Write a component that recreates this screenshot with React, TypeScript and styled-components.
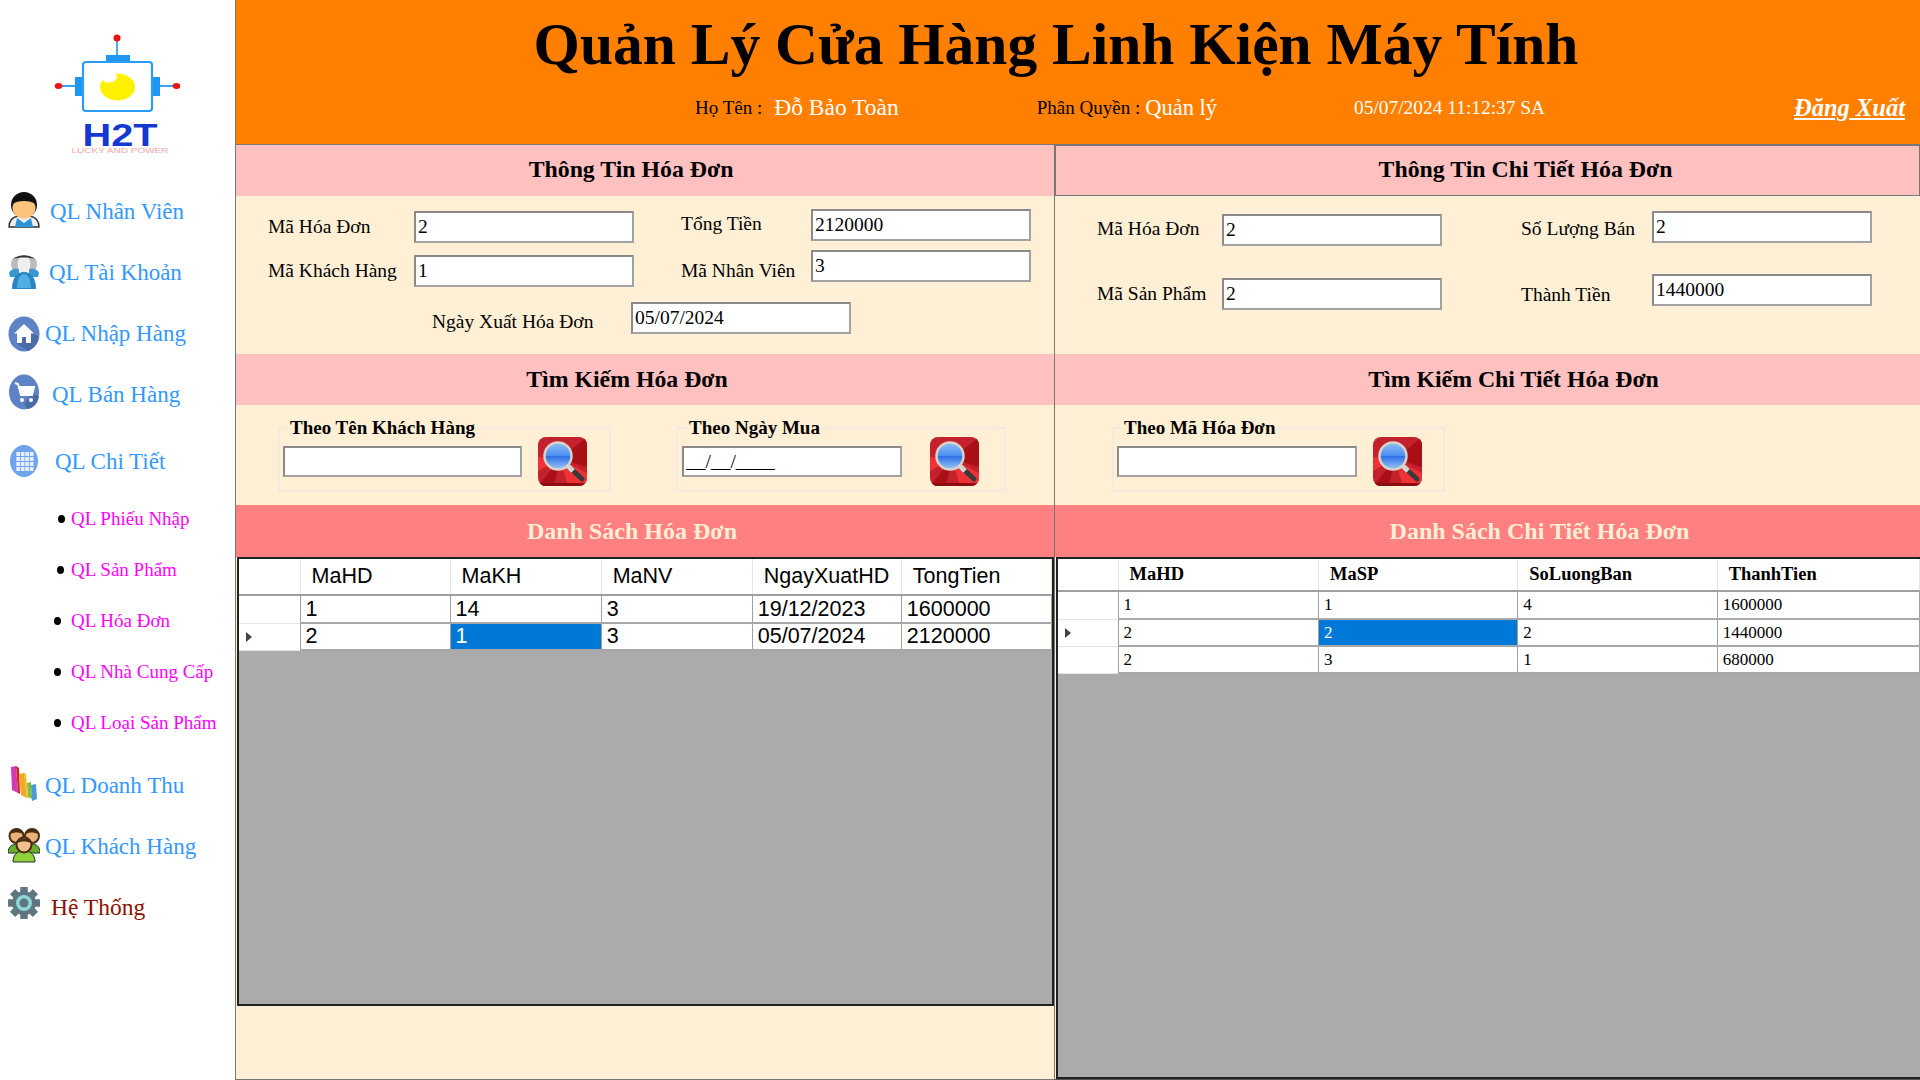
import styled, { createGlobalStyle } from "styled-components";

const GlobalStyle = createGlobalStyle`
  html, body {
    margin: 0;
    padding: 0;
    background: #fff;
    font-family: "Liberation Serif", "Times New Roman", serif;
    overflow: hidden;
  }
  * { box-sizing: border-box; }
`;

const Page = styled.div`
  display: flex;
  width: 1920px;
  height: 1080px;
  overflow: hidden;
`;
const Sidebar = styled.aside`
  width: 236px;
  flex: none;
  background: #fff;
  border-right: 1px solid #777;
`;
const LogoArea = styled.div`
  height: 181px;
  padding: 25px 0 0 50px;
  svg { display: block; }
`;
const NavItem = styled.div<{ $gap: number; $top?: number; $iconUp?: number }>`
  display: flex;
  align-items: center;
  height: 61px;
  padding-left: 8px;
  margin-top: ${(p) => p.$top ?? 0}px;
  svg {
    flex: none;
    margin-right: ${(p) => p.$gap}px;
    transform: translateY(-${(p) => p.$iconUp ?? 0}px);
  }
`;
const NavText = styled.span<{ $dark?: boolean }>`
  font-size: ${(p) => (p.$dark ? 23.5 : 23)}px;
  color: ${(p) => (p.$dark ? "#8B1000" : "#3399ff")};
  white-space: nowrap;
`;
const SubList = styled.div`
  margin-top: 1px;
`;
const SubItem = styled.div<{ $dot: number }>`
  display: flex;
  align-items: center;
  height: 51px;
  padding-left: ${(p) => p.$dot}px;
  font-size: 19px;
  color: #ff00ff;
  white-space: nowrap;
`;
const Dot = styled.span<{ $gap: number }>`
  width: 7px;
  height: 8px;
  border-radius: 50%;
  background: #000;
  margin-right: ${(p) => p.$gap}px;
`;

const Main = styled.main`
  flex: 1;
  display: flex;
  flex-direction: column;
  min-width: 0;
`;
const Header = styled.header`
  height: 145px;
  flex: none;
  background: #ff8000;
  border-bottom: 1px solid #777;
`;
const AppTitle = styled.h1`
  margin: 0;
  height: 88px;
  line-height: 88px;
  font-size: 59.5px;
  font-weight: bold;
  text-align: center;
  padding-right: 44px;
  color: #000;
`;
const InfoRow = styled.div`
  display: flex;
  align-items: center;
  height: 39px;
  padding-left: 459px;
`;
const InfoLabel = styled.span<{ $left?: number }>`
  font-size: 19px;
  color: #000;
  margin-left: ${(p) => p.$left ?? 0}px;
  white-space: nowrap;
`;
const InfoValue = styled.span<{ $left: number; $size?: number }>`
  font-size: ${(p) => p.$size ?? 23.5}px;
  color: #fff;
  margin-left: ${(p) => p.$left}px;
  white-space: nowrap;
`;
const Logout = styled.a`
  margin-left: auto;
  margin-right: 15px;
  font-size: 24.5px;
  font-weight: bold;
  font-style: italic;
  text-decoration: underline;
  color: #fff;
`;

const Panels = styled.div`
  flex: 1;
  display: flex;
  min-height: 0;
`;
const LeftPanel = styled.section`
  width: 818px;
  flex: none;
  display: flex;
  flex-direction: column;
  background: #ffefd5;
  border-bottom: 1px solid #777;
`;
const RightPanel = styled.section`
  flex: 1;
  display: flex;
  flex-direction: column;
  background: #ffefd5;
  min-width: 0;
  border-left: 1px solid #777;
  border-bottom: 1px solid #555;
`;
const SectionTitle = styled.h2<{ $shift: number; $boxed?: boolean; $raise?: number }>`
  margin: 0;
  height: 51px;
  flex: none;
  display: flex;
  align-items: center;
  justify-content: center;
  font-size: 23.8px;
  font-weight: bold;
  color: #000;
  background: #ffc0c0;
  padding-left: ${(p) => Math.max(p.$shift, 0) * 2}px;
  padding-right: ${(p) => Math.max(-p.$shift, 0) * 2}px;
  padding-bottom: ${(p) => p.$raise ?? 0}px;
  ${(p) => (p.$boxed ? "border: 1px solid #777;" : "")}
`;
const ListTitle = styled(SectionTitle)`
  height: 52px;
  font-size: 24px;
  color: #ffefd5;
  background: #ff8080;
`;

const FormBody = styled.div<{ $pad: number }>`
  height: 158px;
  flex: none;
  padding: ${(p) => p.$pad}px 0 0;
`;
const FormRows = styled.div`
  display: flex;
`;
const FormColumn = styled.div<{ $left: number; $gap: number; $top?: number }>`
  display: flex;
  flex-direction: column;
  gap: ${(p) => p.$gap}px;
  margin-left: ${(p) => p.$left}px;
  margin-top: ${(p) => p.$top ?? 0}px;
`;
const Field = styled.div<{ $label: number }>`
  display: grid;
  grid-template-columns: ${(p) => p.$label}px 220px;
  align-items: center;
`;
const FieldLabel = styled.label<{ $dy?: number }>`
  font-size: 19.5px;
  color: #000;
  white-space: nowrap;
  position: relative;
  top: ${(p) => p.$dy ?? 0}px;
`;
const DateField = styled(Field)`
  margin: 15px 0 0 196px;
`;
const TextBox = styled.input`
  display: block;
  width: 220px;
  height: 32px;
  padding: 0 2px;
  font-family: "Liberation Serif", serif;
  font-size: 19.5px;
  color: #000;
  background: #fff;
  border: 2px solid #a2a2a2;
  border-top-color: #8a8a8a;
  border-left-color: #8a8a8a;
  outline: none;
`;

const SearchBody = styled.div<{ $left: number }>`
  height: 100px;
  flex: none;
  display: flex;
  align-items: flex-start;
  padding: 13px 0 0 ${(p) => p.$left}px;
`;
const SearchGroup = styled.fieldset<{ $width: number; $left?: number; $pad?: number }>`
  width: ${(p) => p.$width}px;
  height: 74px;
  margin: 0 0 0 ${(p) => p.$left ?? 0}px;
  padding: 0 0 0 ${(p) => p.$pad ?? 3}px;
  min-width: 0;
  border: 2px solid #f1ebdf;
`;
const SearchLegend = styled.legend`
  height: 20px;
  line-height: 20px;
  padding: 0 2px;
  margin-left: 5px;
  font-size: 19px;
  font-weight: bold;
  color: #000;
`;
const SearchRow = styled.div<{ $gap: number }>`
  display: flex;
  align-items: center;
  gap: ${(p) => p.$gap}px;
  height: 47px;
`;
const SearchBox = styled(TextBox)<{ $width: number }>`
  width: ${(p) => p.$width}px;
  height: 31px;
`;
const SearchButton = styled.button`
  width: 49px;
  height: 49px;
  flex: none;
  padding: 0;
  border: 0;
  background: none;
  svg { display: block; }
`;

const GridBox = styled.div<{ $fill?: boolean }>`
  height: ${(p) => (p.$fill ? "auto" : "449px")};
  flex: ${(p) => (p.$fill ? "1" : "none")};
  background: #ababab;
  border: 2px solid #222;
  margin-left: 1px;
  border-right-width: ${(p) => (p.$fill ? "0" : "2px")};
`;
const DataTable = styled.table<{ $serif?: boolean }>`
  table-layout: fixed;
  border-collapse: collapse;
  width: 100%;
  font-family: ${(p) => (p.$serif ? '"Liberation Serif", serif' : '"Liberation Sans", Arial, sans-serif')};
  font-size: ${(p) => (p.$serif ? "17px" : "21.5px")};
  color: #000;
`;
const HeadRow = styled.tr<{ $height: number }>`
  height: ${(p) => p.$height}px;
`;
const HeadCell = styled.th<{ $serif?: boolean }>`
  padding: 0 0 0 11px;
  text-align: left;
  font-weight: ${(p) => (p.$serif ? "bold" : "normal")};
  font-size: ${(p) => (p.$serif ? "18.5px" : "inherit")};
  white-space: nowrap;
  background: #fff;
  border-right: 1px solid #e4e4e4;
  border-bottom: 2px solid #a0a0a0;
`;
const BodyRow = styled.tr<{ $height: number }>`
  height: ${(p) => p.$height}px;
`;
const Cell = styled.td<{ $selected?: boolean }>`
  padding: 0 0 0 5px;
  white-space: nowrap;
  background: ${(p) => (p.$selected ? "#0078d7" : "#fff")};
  color: ${(p) => (p.$selected ? "#fff" : "#000")};
  border-right: 1px solid #a0a0a0;
  border-bottom: 2px solid #a8a8a8;
`;
const RowHead = styled.td`
  padding: 0 0 0 7px;
  background: #fff;
  border-right: 1px solid #a0a0a0;
  border-bottom: 1px solid #e4e4e4;
`;
const RowArrow = styled.span`
  display: block;
  width: 0;
  height: 0;
  border-top: 5px solid transparent;
  border-bottom: 5px solid transparent;
  border-left: 6px solid #444;
`;
const FooterBlank = styled.div`
  flex: 1;
`;

function PersonIcon() {
  return (
    <svg width="32" height="36" viewBox="0 0 32 36">
      <path d="M1 35c0-7 4-10 9-11h12c5 1 9 4 9 11z" fill="#eee" stroke="#333" strokeWidth="1.4" />
      <path d="M9 26l7 5 7-5 2 9H7z" fill="#2f93d8" />
      <ellipse cx="16" cy="13" rx="13" ry="13" fill="#111" />
      <ellipse cx="16" cy="16" rx="11.500" ry="10.500" fill="#fdc27e" />
      <path d="M5 12c4-4 18-4 22 0-3-10-19-10-22 0z" fill="#111" />
    </svg>
  );
}
function UsersIcon() {
  return (
    <svg width="32" height="36" viewBox="0 0 32 36">
      <ellipse cx="8" cy="10" rx="5" ry="7" fill="#bbb" />
      <ellipse cx="24" cy="10" rx="5" ry="7" fill="#bbb" />
      <path d="M1 19c2-5 8-5 10-3v7H2zM31 19c-2-5-8-5-10-3v7h9z" fill="#3b97cf" />
      <ellipse cx="16" cy="10" rx="6.5" ry="8.5" fill="#eee" />
      <path d="M5 5c6-5 16-5 22 0-6-2-16-2-22 0z" fill="#333" />
      <path d="M4 35c0-10 4-17 12-17s12 7 12 17z" fill="#2a86c2" />
      <path d="M9 34c0-8 3-14 7-14s7 6 7 14z" fill="#52aee0" />
    </svg>
  );
}
function HomeIcon() {
  return (
    <svg width="32" height="36" viewBox="0 0 32 36">
      <ellipse cx="16" cy="18" rx="15.5" ry="17.5" fill="#5d83c6" />
      <path d="M24 16l7 5c-2 8-6 12-11 14l-12-8z" fill="#4b6ba6" />
      <path d="M16 8L6 17.5h3V27h5v-6h4v6h5v-9.500h3z" fill="#fff" />
    </svg>
  );
}
function CartIcon() {
  return (
    <svg width="32" height="36" viewBox="0 0 32 36">
      <ellipse cx="16" cy="18" rx="15" ry="17.500" fill="#5d83c6" />
      <path d="M16 30l8-10 7 2c-1 8-6 12-11 13z" fill="#4b6ba6" />
      <path d="M7 9l3 1 3 11h11l2-8H11" fill="none" stroke="#fff" strokeWidth="2" />
      <path d="M11.500 13h14l-2 8H13.500z" fill="#fff" />
      <circle cx="14" cy="26" r="2" fill="#fff" />
      <circle cx="23" cy="26" r="2" fill="#fff" />
    </svg>
  );
}
function GridIcon() {
  const cells = [10, 14.5, 19, 23.5];
  return (
    <svg width="32" height="36" viewBox="0 0 32 36">
      <ellipse cx="16" cy="18" rx="14" ry="16" fill="#6fa3ea" />
      {cells.map((x) =>
        [9, 14, 19, 24].map((y) => (
          <rect key={`${x}-${y}`} x={x - 1.7} y={y} width="3.700" height="4" fill="#e6effb" />
        ))
      )}
    </svg>
  );
}
function ChartIcon() {
  return (
    <svg width="32" height="36" viewBox="0 0 32 36">
      <path d="M3 2l5-1 2 27-6-3z" fill="#d43ab0" />
      <path d="M8 1l3 2 1 26-2-1z" fill="#c62828" />
      <path d="M11 9l5-1 3 25-6-3z" fill="#f5a623" />
      <path d="M16 8l2 1 2 24-1 0z" fill="#e2c21a" />
      <path d="M19 18l4-1 1 17-4-2z" fill="#7fbf3a" />
      <path d="M23 20l5-1 1 15-5 2z" fill="#4e9ad4" />
    </svg>
  );
}
function CustomersIcon() {
  return (
    <svg width="32" height="36" viewBox="0 0 32 36">
      <circle cx="8.500" cy="9" r="7" fill="#e8b27a" stroke="#4a2c12" strokeWidth="2" />
      <circle cx="24" cy="9" r="7" fill="#e8b27a" stroke="#4a2c12" strokeWidth="2" />
      <path d="M2 7c2-6 11-6 13 0-4-2-9-2-13 0zM17 7c2-6 11-6 13 0-4-2-9-2-13 0z" fill="#4a2c12" />
      <path d="M0 26c0-7 5-9 9-9s8 2 8 9zM15 26c0-7 5-9 9-9s8 2 8 9z" fill="#6cae2c" stroke="#233" strokeWidth="1" />
      <path d="M5 35c0-8 5-11 11-11s11 3 11 11z" fill="#8fd13a" stroke="#233" strokeWidth="1" />
      <circle cx="16" cy="18" r="7.500" fill="#f2c08c" stroke="#4a2c12" strokeWidth="2" />
      <path d="M9 16c2-6 12-6 14 0-4-2-10-2-14 0z" fill="#4a2c12" />
    </svg>
  );
}
function GearIcon() {
  const teeth = [0, 45, 90, 135, 180, 225, 270, 315];
  return (
    <svg width="32" height="36" viewBox="0 0 32 36">
      {teeth.map((a) => (
        <rect key={a} x="12.500" y="2" width="7" height="32" fill="#5f7681" transform={`rotate(${a} 16 18)`} />
      ))}
      <circle cx="16" cy="18" r="12" fill="#5f7681" />
      <circle cx="16" cy="18" r="8" fill="#8ed6d8" />
      <circle cx="16" cy="18" r="4.500" fill="#5f7681" />
    </svg>
  );
}
function Logo() {
  return (
    <svg width="130" height="130" viewBox="50 25 130 130">
      <g stroke="#3aa0f5" fill="none" strokeWidth="1.800">
        <path d="M117 38v18M58 86h18M160 86h17" />
      </g>
      <rect x="106" y="55" width="24" height="7" fill="#1f96f3" />
      <rect x="75" y="77" width="8" height="19" fill="#1f96f3" />
      <rect x="152" y="77" width="8" height="19" fill="#1f96f3" />
      <rect x="83" y="62" width="69" height="49" rx="3" fill="#fff" stroke="#2b9cf5" strokeWidth="2.200" />
      <ellipse cx="117.500" cy="87" rx="17.500" ry="13.500" fill="#fff200" />
      <ellipse cx="109" cy="77" rx="8" ry="5.500" fill="#fff" />
      <circle cx="117" cy="38" r="3.500" fill="#ee1111" />
      <ellipse cx="58.500" cy="86" rx="3.800" ry="3" fill="#ee1111" />
      <ellipse cx="176.500" cy="86" rx="3.800" ry="3" fill="#ee1111" />
      <text x="120" y="146" textAnchor="middle" fontFamily="Liberation Sans, sans-serif" fontWeight="bold" fontSize="31" fill="#1438d2" textLength="75" lengthAdjust="spacingAndGlyphs">H2T</text>
      <text x="120" y="153" textAnchor="middle" fontFamily="Liberation Sans, sans-serif" fontSize="8" fill="#f0a6a6" textLength="97" lengthAdjust="spacingAndGlyphs">LUCKY AND POWER</text>
    </svg>
  );
}
function MagnifierIcon({ id }: { id: string }) {
  return (
    <svg width="49" height="49" viewBox="0 0 49 49">
      <defs>
        <clipPath id={`clip-${id}`}>
          <rect x="0" y="0" width="49" height="49" rx="8" />
        </clipPath>
        <linearGradient id={`lens-${id}`} x1="0" y1="0" x2="0" y2="1">
          <stop offset="0" stopColor="#8fc0f5" />
          <stop offset="0.500" stopColor="#4a8ef0" />
          <stop offset="0.520" stopColor="#2f6fe6" />
          <stop offset="1" stopColor="#9ec8f7" />
        </linearGradient>
      </defs>
      <g clipPath={`url(#clip-${id})`}>
        <rect width="49" height="49" fill="#c3222c" />
        <path d="M22 22L49 0v18zM22 22L0 49h16zM22 22L49 30V18z" fill="#a80f16" />
        <path d="M22 22L30 49h19V36zM22 22L0 20v14z" fill="#f03236" />
        <rect y="46" width="49" height="3" fill="#8d0c12" />
      </g>
      <path d="M30 29l14 13" stroke="#3a3a3a" strokeWidth="5" strokeLinecap="round" />
      <path d="M30 29l5 5" stroke="#d8d8d8" strokeWidth="5" />
      <circle cx="20" cy="19" r="13.500" fill={`url(#lens-${id})`} stroke="#d9d2c8" strokeWidth="2.500" />
    </svg>
  );
}

interface IGrid {
  widths: number[];
  heads: string[];
  rows: string[][];
  headHeight: number;
  rowHeights: number[];
  selRow: number;
  selCol: number;
  serif?: boolean;
}

function Grid({ widths, heads, rows, headHeight, rowHeights, selRow, selCol, serif }: IGrid) {
  return (
    <DataTable $serif={serif}>
      <colgroup>
        {widths.map((w, i) => (
          <col key={i} style={{ width: w }} />
        ))}
      </colgroup>
      <tbody>
        <HeadRow $height={headHeight}>
          <HeadCell $serif={serif} />
          {heads.map((h) => (
            <HeadCell key={h} $serif={serif}>{h}</HeadCell>
          ))}
        </HeadRow>
        {rows.map((row, r) => (
          <BodyRow key={r} $height={rowHeights[r]}>
            <RowHead>{r === selRow ? <RowArrow /> : null}</RowHead>
            {row.map((v, c) => (
              <Cell key={c} $selected={r === selRow && c === selCol}>{v}</Cell>
            ))}
          </BodyRow>
        ))}
      </tbody>
    </DataTable>
  );
}

function App() {
  return (
    <>
      <GlobalStyle />
      <Page>
        <Sidebar>
          <LogoArea><Logo /></LogoArea>
          <NavItem $gap={10} $iconUp={2}><PersonIcon /><NavText>QL Nhân Viên</NavText></NavItem>
          <NavItem $gap={9} $iconUp={1}><UsersIcon /><NavText>QL Tài Khoản</NavText></NavItem>
          <NavItem $gap={5}><HomeIcon /><NavText>QL Nhập Hàng</NavText></NavItem>
          <NavItem $gap={12} $iconUp={3}><CartIcon /><NavText>QL Bán Hàng</NavText></NavItem>
          <NavItem $gap={15} $top={6} $iconUp={1}><GridIcon /><NavText>QL Chi Tiết</NavText></NavItem>
          <SubList>
            <SubItem $dot={58}><Dot $gap={6} />QL Phiếu Nhập</SubItem>
            <SubItem $dot={57}><Dot $gap={7} />QL Sản Phẩm</SubItem>
            <SubItem $dot={54}><Dot $gap={10} />QL Hóa Đơn</SubItem>
            <SubItem $dot={54}><Dot $gap={10} />QL Nhà Cung Cấp</SubItem>
            <SubItem $dot={54}><Dot $gap={10} />QL Loại Sản Phẩm</SubItem>
          </SubList>
          <NavItem $gap={5} $top={7} $iconUp={3}><ChartIcon /><NavText>QL Doanh Thu</NavText></NavItem>
          <NavItem $gap={5} $iconUp={2}><CustomersIcon /><NavText>QL Khách Hàng</NavText></NavItem>
          <NavItem $gap={11} $iconUp={5}><GearIcon /><NavText $dark>Hệ Thống</NavText></NavItem>
        </Sidebar>
        <Main>
          <Header>
            <AppTitle>Quản Lý Cửa Hàng Linh Kiện Máy Tính</AppTitle>
            <InfoRow>
              <InfoLabel>Họ Tên :</InfoLabel>
              <InfoValue $left={12}>Đỗ Bảo Toàn</InfoValue>
              <InfoLabel $left={138}>Phân Quyền :</InfoLabel>
              <InfoValue $left={5} $size={22.5}>Quản lý</InfoValue>
              <InfoValue $left={137} $size={19.4}>05/07/2024 11:12:37 SA</InfoValue>
              <Logout>Đăng Xuất</Logout>
            </InfoRow>
          </Header>
          <Panels>
            <LeftPanel>
              <SectionTitle $shift={-14} $raise={3}>Thông Tin Hóa Đơn</SectionTitle>
              <FormBody $pad={13}>
                <FormRows>
                  <FormColumn $left={32} $gap={12} $top={2}>
                    <Field $label={146}>
                      <FieldLabel>Mã Hóa Đơn</FieldLabel>
                      <TextBox readOnly defaultValue="2" />
                    </Field>
                    <Field $label={146}>
                      <FieldLabel>Mã Khách Hàng</FieldLabel>
                      <TextBox readOnly defaultValue="1" />
                    </Field>
                  </FormColumn>
                  <FormColumn $left={47} $gap={9}>
                    <Field $label={130}>
                      <FieldLabel $dy={-1}>Tổng Tiền</FieldLabel>
                      <TextBox readOnly defaultValue="2120000" />
                    </Field>
                    <Field $label={130}>
                      <FieldLabel $dy={5}>Mã Nhân Viên</FieldLabel>
                      <TextBox readOnly defaultValue="3" />
                    </Field>
                  </FormColumn>
                </FormRows>
                <DateField $label={199}>
                  <FieldLabel $dy={4}>Ngày Xuất Hóa Đơn</FieldLabel>
                  <TextBox readOnly defaultValue="05/07/2024" />
                </DateField>
              </FormBody>
              <SectionTitle $shift={-18}>Tìm Kiếm Hóa Đơn</SectionTitle>
              <SearchBody $left={42}>
                <SearchGroup $width={333}>
                  <SearchLegend>Theo Tên Khách Hàng</SearchLegend>
                  <SearchRow $gap={16}>
                    <SearchBox $width={239} readOnly />
                    <SearchButton><MagnifierIcon id="a" /></SearchButton>
                  </SearchRow>
                </SearchGroup>
                <SearchGroup $width={330} $left={65} $pad={4}>
                  <SearchLegend>Theo Ngày Mua</SearchLegend>
                  <SearchRow $gap={28}>
                    <SearchBox $width={220} readOnly defaultValue="__/__/____" />
                    <SearchButton><MagnifierIcon id="b" /></SearchButton>
                  </SearchRow>
                </SearchGroup>
              </SearchBody>
              <ListTitle $shift={-13}>Danh Sách Hóa Đơn</ListTitle>
              <GridBox>
                <Grid
                  widths={[61, 150, 151, 151, 149, 150]}
                  heads={["MaHD", "MaKH", "MaNV", "NgayXuatHD", "TongTien"]}
                  rows={[
                    ["1", "14", "3", "19/12/2023", "1600000"],
                    ["2", "1", "3", "05/07/2024", "2120000"],
                  ]}
                  headHeight={36}
                  rowHeights={[28, 27]}
                  selRow={1}
                  selCol={1}
                />
              </GridBox>
              <FooterBlank />
            </LeftPanel>
            <RightPanel>
              <SectionTitle $shift={38} $boxed $raise={3}>Thông Tin Chi Tiết Hóa Đơn</SectionTitle>
              <FormBody $pad={15}>
                <FormRows>
                  <FormColumn $left={42} $gap={32} $top={3}>
                    <Field $label={125}>
                      <FieldLabel $dy={-1}>Mã Hóa Đơn</FieldLabel>
                      <TextBox readOnly defaultValue="2" />
                    </Field>
                    <Field $label={125}>
                      <FieldLabel>Mã Sản Phẩm</FieldLabel>
                      <TextBox readOnly defaultValue="2" />
                    </Field>
                  </FormColumn>
                  <FormColumn $left={79} $gap={31}>
                    <Field $label={131}>
                      <FieldLabel $dy={2}>Số Lượng Bán</FieldLabel>
                      <TextBox readOnly defaultValue="2" />
                    </Field>
                    <Field $label={131}>
                      <FieldLabel $dy={5}>Thành Tiền</FieldLabel>
                      <TextBox readOnly defaultValue="1440000" />
                    </Field>
                  </FormColumn>
                </FormRows>
              </FormBody>
              <SectionTitle $shift={26}>Tìm Kiếm Chi Tiết Hóa Đơn</SectionTitle>
              <SearchBody $left={57}>
                <SearchGroup $width={333}>
                  <SearchLegend>Theo Mã Hóa Đơn</SearchLegend>
                  <SearchRow $gap={16}>
                    <SearchBox $width={240} readOnly />
                    <SearchButton><MagnifierIcon id="c" /></SearchButton>
                  </SearchRow>
                </SearchGroup>
              </SearchBody>
              <ListTitle $shift={52}>Danh Sách Chi Tiết Hóa Đơn</ListTitle>
              <GridBox $fill>
                <Grid
                  serif
                  widths={[60, 200, 199, 199, 202]}
                  heads={["MaHD", "MaSP", "SoLuongBan", "ThanhTien"]}
                  rows={[
                    ["1", "1", "4", "1600000"],
                    ["2", "2", "2", "1440000"],
                    ["2", "3", "1", "680000"],
                  ]}
                  headHeight={32}
                  rowHeights={[28, 27, 27]}
                  selRow={1}
                  selCol={1}
                />
              </GridBox>
            </RightPanel>
          </Panels>
        </Main>
      </Page>
    </>
  );
}

export default App;
